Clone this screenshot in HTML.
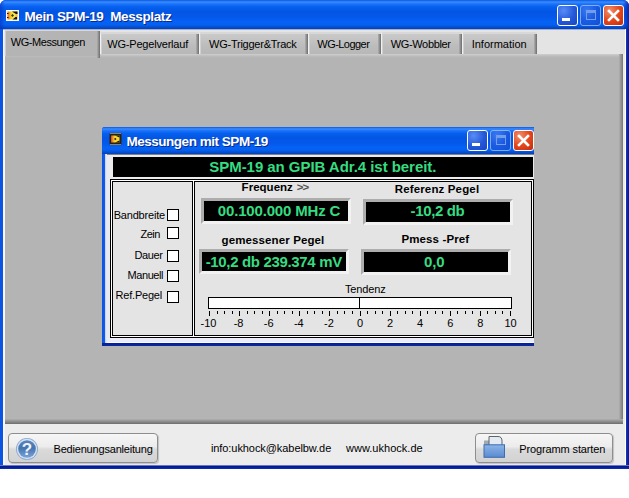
<!DOCTYPE html>
<html><head><meta charset="utf-8"><title>Mein SPM-19 Messplatz</title>
<style>
html,body{margin:0;padding:0}
body{width:629px;height:498px;background:#fff;overflow:hidden;position:relative;font-family:"Liberation Sans",sans-serif}
div,span,svg{position:absolute;box-sizing:border-box}
.t{white-space:pre;line-height:20px;height:20px;font-size:11px;color:#000}
#w{left:0;top:0;width:629px;height:469px;border-radius:6px 6px 0 0;overflow:hidden;background:#0a32c8}
#tb{left:0;top:0;width:629px;height:29px;background:linear-gradient(to bottom,#0a58e0 0%,#3a8cff 7%,#1a72fa 14%,#0660ee 24%,#0356e4 40%,#0458ea 60%,#0662f6 76%,#0560ee 86%,#0450d2 93%,#0a3fb0 100%)}
#lb{left:0;top:29px;width:3px;height:440px;background:#0a55e4}
#rb{left:625px;top:29px;width:4px;height:440px;background:linear-gradient(to right,#fff 0,#fff 1px,#1a38b8 1px,#00169e 100%)}
#bb{left:0;top:465px;width:629px;height:4px;background:linear-gradient(to bottom,#d8dcf0 0,#00138c 1px,#0a30b8 100%)}
#cl{left:3px;top:29px;width:622px;height:436px;background:#ececec;border-top:1px solid #9fb0d6}
#ts{left:0;top:0px;width:622px;height:24px;background:#e4e4e4}
.tab{background:linear-gradient(to bottom,#cacaca,#bcbcbc 60%,#b8b8b8);top:2px;height:22px;border-left:1px solid #f0f0f0;border-top:2px solid #d8d8d8;border-radius:2px 2px 0 0;box-shadow:inset 1px 0 0 #d0d0d0}
.tab i{position:absolute;right:0;top:0;bottom:0;width:3px;background:linear-gradient(to right,#b0b0b0,#6c6c6c)}
#panel{left:2px;top:24px;width:618px;height:370px;background:linear-gradient(to bottom,#cfcfcf 0,#bcbcbc 2px,#b4b4b4 4px)}
#panel .r{right:0;top:0;width:4px;height:370px;background:linear-gradient(to right,#b0b0b0,#767676)}
#panel .b{left:0;bottom:0;width:618px;height:5px;background:linear-gradient(to bottom,#b0b0b0,#6c6c6c)}
.cb{width:21px;height:21px;top:5px;border:1px solid #fff;border-radius:3px}
.cbb{background:radial-gradient(circle at 30% 25%,#5a8cf5 0,#2458d8 55%,#1a46c2 100%)}
.cbx{background:radial-gradient(circle at 30% 25%,#f0906c 0,#e4481e 50%,#c22c0c 100%)}
.btn{height:30px;top:433px;border:1px solid #8e8e8e;border-radius:4px;background:linear-gradient(to bottom,#f6f6f6 0,#ececec 45%,#dadada 55%,#d2d2d2 100%);box-shadow:1px 1px 1px rgba(0,0,0,.18)}
/* inner window */
#iw{left:102px;top:127px;width:432px;height:219px;overflow:hidden;background:#0a32c8;border-radius:3px 0 0 0}
#itb{left:0;top:0;width:432px;height:27px;background:linear-gradient(to bottom,#0a58e0 0%,#3a8cff 7%,#1a72fa 14%,#0660ee 24%,#0356e4 40%,#0458ea 60%,#0662f6 76%,#0560ee 86%,#0450d2 93%,#0a3fb0 100%)}
#ilb{left:0;top:27px;width:5px;height:192px;background:linear-gradient(to right,#0a55e4 0,#1a5ae0 3px,#b8ccf4 3px,#eef2fc 5px)}
#icl{left:4px;top:27px;width:428px;height:184px;background:#ebebee;border-top:1px solid #7c8494}
#ibl{left:3px;top:211px;width:429px;height:5px;background:linear-gradient(to bottom,#ecebf8 0,#ecebf8 4px,#fcfcff 4px)}
#ibb{left:0;top:216px;width:432px;height:3px;background:linear-gradient(to bottom,#0a1e8c,#0a2aa4)}
.disp{background:#000;border:3px solid;border-color:#adadad #f2f2f2 #f2f2f2 #adadad}
.chk{width:12px;height:12px;left:167px;background:#fff;border:1px solid #000}
</style></head><body>
<div id="w">
 <div id="tb"></div><div style="left:623px;top:0;width:6px;height:29px;background:linear-gradient(to right,rgba(8,32,160,0),rgba(8,32,160,.85))"></div><div style="left:0;top:0;width:5px;height:29px;background:linear-gradient(to left,rgba(8,48,190,0),rgba(8,48,190,.6))"></div>
 <div id="lb"></div><div id="rb"></div><div id="bb"></div>
 <div id="cl">
  <div id="ts"></div><div style="left:0;top:0;width:2px;height:435px;background:#f7f7f7"></div>
  <div class="tab" style="left:97px;width:99px"><i></i></div>
  <div class="tab" style="left:196px;width:109px"><i></i></div>
  <div class="tab" style="left:305px;width:73px"><i></i></div>
  <div class="tab" style="left:378px;width:81px"><i></i></div>
  <div class="tab" style="left:459px;width:75px"><i></i></div>
  <div id="panel"><div class="r"></div><div class="b"></div></div>
  <div class="tab" style="left:1px;top:0px;width:96px;height:26px;background:#b4b4b4;border-top:1px solid #d8d8d8;border-left:1px solid #e8e8e8"><i style="bottom:-2px"></i></div>
 </div>
 <!-- title icon -->
 <svg style="left:6px;top:10px" width="13" height="11" viewBox="0 0 13 11"><defs><linearGradient id="ig" x1="0" y1="0" x2="1" y2="0"><stop offset="0" stop-color="#e86428"/><stop offset=".35" stop-color="#f4d030"/><stop offset=".7" stop-color="#f8e850"/><stop offset="1" stop-color="#e8a838"/></linearGradient></defs><rect width="13" height="11" fill="#f6faf6"/><rect x="1.5" y="1.5" width="10" height="8" fill="url(#ig)"/><path d="M6 1.5 H11.5 V4 H10 Z" fill="#141008"/><path d="M6.5 9.5 H11 V7 H9.5 Z" fill="#141008"/><path d="M5 5.5 L6.5 4 L8 5.5 L6.5 7 Z" fill="#284010"/><rect x="1" y="3" width="1.5" height="1" fill="#201008"/><rect x="1" y="7" width="1.5" height="1" fill="#201008"/></svg>
 <div class="cb cbb" style="left:557px"><div style="left:4px;top:12px;width:8px;height:3px;background:#fff"></div></div>
 <div class="cb cbb" style="left:580px;opacity:.62;border-color:#c8d8ff"><div style="left:5px;top:4px;width:10px;height:10px;border:1px solid #b8c8f0;border-top-width:3px"></div></div>
 <div class="cb cbx" style="left:603px"><svg style="left:0;top:0" width="19" height="19" viewBox="0 0 19 19"><path d="M5 5 L14 14 M14 5 L5 14" stroke="#fff" stroke-width="2.6" stroke-linecap="square"/></svg></div>
 <!-- bottom buttons -->
 <div class="btn" style="left:8px;width:150px">
  <svg style="left:6px;top:3px" width="24" height="24" viewBox="0 0 24 24"><defs><linearGradient id="g1" x1="0" y1="0" x2="0" y2="1"><stop offset="0" stop-color="#5c86bc"/><stop offset=".45" stop-color="#4674ae"/><stop offset="1" stop-color="#7aa4d8"/></linearGradient></defs><circle cx="12" cy="12" r="11" fill="#8ea8cc"/><circle cx="12" cy="12" r="10.2" fill="#d2e2f6"/><circle cx="12" cy="12" r="8.8" fill="url(#g1)"/><text x="12" y="18.2" text-anchor="middle" font-family="Liberation Sans, sans-serif" font-weight="bold" font-size="17" fill="#eef4fc">?</text></svg>
 </div>
 <div class="btn" style="left:475px;width:138px">
  <svg style="left:7px;top:1px" width="24" height="25" viewBox="0 0 24 25"><defs><linearGradient id="g2" x1="0" y1="0" x2="0" y2="1"><stop offset="0" stop-color="#8cb4e8"/><stop offset="1" stop-color="#5a8ad0"/></linearGradient></defs><rect x="1" y="5.5" width="8" height="8" fill="#a4a8b0"/><path d="M6 1.5 H15 Q19 1.5 19 6 V12 H6 Z" fill="#e4eaf2" stroke="#5c646c" stroke-width="1"/><rect x="1" y="9.8" width="20.5" height="12.5" fill="url(#g2)" stroke="#3e6cae" stroke-width="1"/></svg>
 </div>
</div>

<!-- inner window -->
<div id="iw">
 <div id="itb"></div><div id="icl"></div><div id="ibl"></div><div id="ilb"></div><div id="ibb"></div>
 <svg style="left:7px;top:6px" width="13" height="12" viewBox="0 0 13 12"><defs><linearGradient id="ig2" x1="0" y1="0" x2="1" y2="0"><stop offset="0" stop-color="#d84020"/><stop offset=".25" stop-color="#f0a028"/><stop offset=".5" stop-color="#f8e030"/><stop offset="1" stop-color="#f4d038"/></linearGradient></defs><rect x=".5" y=".5" width="12" height="11" fill="#2a2210"/><rect x="1" y="0" width="11" height="1" fill="#8a8460"/><rect x="1" y="11" width="11" height="1" fill="#8a8460"/><rect x="2" y="2.5" width="8.5" height="7" fill="url(#ig2)"/><path d="M6 2.5 H10.5 V4.5 Z" fill="#1a1408"/><path d="M6 9.5 H10.5 V7.5 Z" fill="#1a1408"/><path d="M5 6 L6.3 4.7 L7.6 6 L6.3 7.3 Z" fill="#382808"/></svg>
 <div class="cb cbb" style="left:365px;top:3px"><div style="left:4px;top:12px;width:8px;height:3px;background:#fff"></div></div>
 <div class="cb cbb" style="left:388px;top:3px;opacity:.62;border-color:#c8d8ff"><div style="left:5px;top:4px;width:10px;height:10px;border:1px solid #b8c8f0;border-top-width:3px"></div></div>
 <div class="cb cbx" style="left:411px;top:3px"><svg style="left:0;top:0" width="19" height="19" viewBox="0 0 19 19"><path d="M5 5 L14 14 M14 5 L5 14" stroke="#fff" stroke-width="2.6" stroke-linecap="square"/></svg></div>
 <!-- status -->
 <div style="left:11px;top:30px;width:420px;height:20px;background:#000"></div>
 <!-- frame -->
 <div style="left:8px;top:52px;width:424px;height:159px;border:1px solid #000;background:#fff"></div>
 <div style="left:10px;top:54px;width:420px;height:155px;border:1px solid #000;background:#e4e4e4"></div>
 <div style="left:90px;top:54px;width:3px;height:155px;background:#fff;border-left:1px solid #000;border-right:1px solid #000"></div>
 <!-- checkboxes -->
 <div class="chk" style="left:65px;top:82px"></div>
 <div class="chk" style="left:65px;top:100px"></div>
 <div class="chk" style="left:65px;top:123px"></div>
 <div class="chk" style="left:65px;top:143px"></div>
 <div class="chk" style="left:65px;top:164px"></div>
 <!-- displays -->
 <div class="disp" style="left:99px;top:71px;width:150px;height:26px"></div>
 <div class="disp" style="left:261px;top:72px;width:150px;height:26px"></div>
 <div class="disp" style="left:97px;top:122px;width:150px;height:25px"></div>
 <div class="disp" style="left:259px;top:122px;width:150px;height:26px"></div>
 <!-- slider -->
 <div style="left:106px;top:170px;width:304px;height:12px;background:#fff;border:1px solid #000"></div>
 <div style="left:257px;top:170px;width:1px;height:12px;background:#000"></div>
 <svg style="left:100px;top:184px" width="320" height="6" viewBox="0 0 320 6"><rect x="7" y="0" width="1" height="5" fill="#000"/><rect x="15" y="0" width="1" height="3" fill="#000"/><rect x="22" y="0" width="1" height="3" fill="#000"/><rect x="30" y="0" width="1" height="3" fill="#000"/><rect x="37" y="0" width="1" height="5" fill="#000"/><rect x="45" y="0" width="1" height="3" fill="#000"/><rect x="52" y="0" width="1" height="3" fill="#000"/><rect x="60" y="0" width="1" height="3" fill="#000"/><rect x="67" y="0" width="1" height="5" fill="#000"/><rect x="75" y="0" width="1" height="3" fill="#000"/><rect x="82" y="0" width="1" height="3" fill="#000"/><rect x="90" y="0" width="1" height="3" fill="#000"/><rect x="97" y="0" width="1" height="5" fill="#000"/><rect x="105" y="0" width="1" height="3" fill="#000"/><rect x="112" y="0" width="1" height="3" fill="#000"/><rect x="120" y="0" width="1" height="3" fill="#000"/><rect x="127" y="0" width="1" height="5" fill="#000"/><rect x="135" y="0" width="1" height="3" fill="#000"/><rect x="142" y="0" width="1" height="3" fill="#000"/><rect x="150" y="0" width="1" height="3" fill="#000"/><rect x="158" y="0" width="1" height="5" fill="#000"/><rect x="165" y="0" width="1" height="3" fill="#000"/><rect x="173" y="0" width="1" height="3" fill="#000"/><rect x="180" y="0" width="1" height="3" fill="#000"/><rect x="188" y="0" width="1" height="5" fill="#000"/><rect x="195" y="0" width="1" height="3" fill="#000"/><rect x="203" y="0" width="1" height="3" fill="#000"/><rect x="210" y="0" width="1" height="3" fill="#000"/><rect x="218" y="0" width="1" height="5" fill="#000"/><rect x="225" y="0" width="1" height="3" fill="#000"/><rect x="233" y="0" width="1" height="3" fill="#000"/><rect x="240" y="0" width="1" height="3" fill="#000"/><rect x="248" y="0" width="1" height="5" fill="#000"/><rect x="255" y="0" width="1" height="3" fill="#000"/><rect x="263" y="0" width="1" height="3" fill="#000"/><rect x="270" y="0" width="1" height="3" fill="#000"/><rect x="278" y="0" width="1" height="5" fill="#000"/><rect x="285" y="0" width="1" height="3" fill="#000"/><rect x="293" y="0" width="1" height="3" fill="#000"/><rect x="300" y="0" width="1" height="3" fill="#000"/><rect x="308" y="0" width="1" height="5" fill="#000"/></svg>
</div>
<span class="t" style="left:24.4px;top:6.6px;font-size:13.5px;font-weight:bold;color:#fff;letter-spacing:-0.38px;text-shadow:1px 1px 0 #0a2a8c;">Mein SPM-19  Messplatz</span>
<span class="t" style="left:10.7px;top:32.2px;font-size:11px;letter-spacing:-0.43px;">WG-Messungen</span>
<span class="t" style="left:107.3px;top:34.2px;font-size:11px;letter-spacing:-0.20px;">WG-Pegelverlauf</span>
<span class="t" style="left:209.0px;top:34.2px;font-size:11px;letter-spacing:-0.24px;">WG-Trigger&amp;Track</span>
<span class="t" style="left:317.3px;top:34.2px;font-size:11px;letter-spacing:-0.54px;">WG-Logger</span>
<span class="t" style="left:390.7px;top:34.2px;font-size:11px;letter-spacing:-0.34px;">WG-Wobbler</span>
<span class="t" style="left:471.7px;top:34.2px;font-size:11px;">Information</span>
<span class="t" style="left:53.5px;top:438.6px;font-size:11px;letter-spacing:-0.19px;">Bedienungsanleitung</span>
<span class="t" style="left:210.9px;top:437.8px;font-size:11px;letter-spacing:-0.07px;">info:ukhock@kabelbw.de</span>
<span class="t" style="left:346.0px;top:437.8px;font-size:11px;letter-spacing:0.02px;">www.ukhock.de</span>
<span class="t" style="left:519.2px;top:438.6px;font-size:11px;letter-spacing:-0.12px;">Programm starten</span>
<span class="t" style="left:126.4px;top:131.5px;font-size:13.5px;font-weight:bold;color:#fff;letter-spacing:-0.47px;text-shadow:1px 1px 0 #0a2a8c;">Messungen mit SPM-19</span>
<span class="t" style="left:209.3px;top:156.8px;font-size:15px;font-weight:bold;color:#36dc82;letter-spacing:-0.05px;">SPM-19 an GPIB Adr.4 ist bereit.</span>
<span class="t" style="left:113.7px;top:204.9px;font-size:11px;letter-spacing:-0.19px;">Bandbreite</span>
<span class="t" style="left:140.5px;top:224.2px;font-size:11px;letter-spacing:-0.53px;">Zein</span>
<span class="t" style="left:134.5px;top:245.0px;font-size:11px;letter-spacing:-0.41px;">Dauer</span>
<span class="t" style="left:127.6px;top:264.9px;font-size:11px;letter-spacing:-0.45px;">Manuell</span>
<span class="t" style="left:115.6px;top:284.7px;font-size:11px;letter-spacing:-0.21px;">Ref.Pegel</span>
<span class="t" style="left:241.6px;top:177.4px;font-size:11.5px;font-weight:bold;letter-spacing:0.02px;">Frequenz</span>
<span class="t" style="left:296.7px;top:177.4px;font-size:11.5px;font-weight:bold;color:#555;letter-spacing:-0.97px;">&gt;&gt;</span>
<span class="t" style="left:394.7px;top:178.5px;font-size:11.5px;font-weight:bold;letter-spacing:0.15px;">Referenz Pegel</span>
<span class="t" style="left:221.5px;top:229.5px;font-size:11.5px;font-weight:bold;letter-spacing:0.12px;">gemessener Pegel</span>
<span class="t" style="left:401.4px;top:229.2px;font-size:11.5px;font-weight:bold;letter-spacing:0.13px;">Pmess -Pref</span>
<span class="t" style="left:217.8px;top:201.3px;font-size:15px;font-weight:bold;color:#36dc82;letter-spacing:-0.17px;">00.100.000 MHz C</span>
<span class="t" style="left:410.6px;top:201.3px;font-size:15px;font-weight:bold;color:#36dc82;letter-spacing:-0.36px;">-10,2 db</span>
<span class="t" style="left:205.7px;top:251.6px;font-size:15px;font-weight:bold;color:#36dc82;letter-spacing:-0.34px;">-10,2 db 239.374 mV</span>
<span class="t" style="left:424.0px;top:251.6px;font-size:15px;font-weight:bold;color:#36dc82;letter-spacing:-0.12px;">0,0</span>
<span class="t" style="left:345.0px;top:278.7px;font-size:11px;letter-spacing:-0.16px;">Tendenz</span>
<span class="t" style="left:200.5px;top:312.7px;font-size:11px;">-10</span>
<span class="t" style="left:233.7px;top:312.7px;font-size:11px;">-8</span>
<span class="t" style="left:263.8px;top:312.7px;font-size:11px;">-6</span>
<span class="t" style="left:293.9px;top:312.7px;font-size:11px;">-4</span>
<span class="t" style="left:324.0px;top:312.7px;font-size:11px;">-2</span>
<span class="t" style="left:356.9px;top:312.7px;font-size:11px;">0</span>
<span class="t" style="left:387.0px;top:312.7px;font-size:11px;">2</span>
<span class="t" style="left:417.1px;top:312.7px;font-size:11px;">4</span>
<span class="t" style="left:447.2px;top:312.7px;font-size:11px;">6</span>
<span class="t" style="left:477.3px;top:312.7px;font-size:11px;">8</span>
<span class="t" style="left:504.4px;top:312.7px;font-size:11px;">10</span>
</body></html>
